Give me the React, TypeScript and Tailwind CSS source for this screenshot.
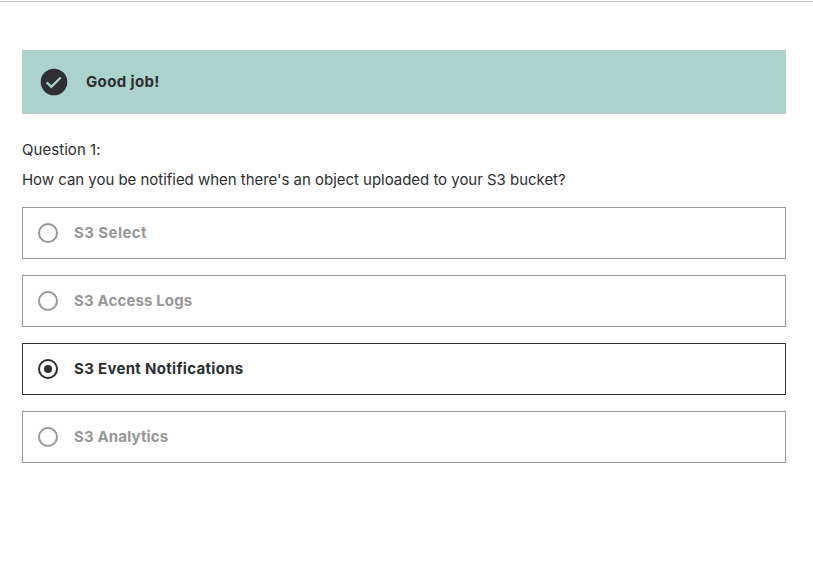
const options = [
  { label: 'S3 Select', tracking: 'tracking-[0.42px]' },
  { label: 'S3 Access Logs', tracking: 'tracking-[0.14px]' },
  { label: 'S3 Event Notifications', tracking: 'tracking-[0.31px]', selected: true },
  { label: 'S3 Analytics', tracking: 'tracking-[0.14px]' },
];

function CheckCircle() {
  return (
    <svg width="28" height="28" viewBox="0 0 28 28" aria-hidden="true">
      <circle cx="14" cy="14" r="13.3" fill="#2d2f31" />
      <path d="M6.7 14.4l4.6 4.5 9.4-9.4" fill="none" stroke="#acd2cc" strokeWidth="2.2" />
    </svg>
  );
}

function Radio({ checked }: { checked?: boolean }) {
  return (
    <svg width="20" height="20" viewBox="0 0 20 20" aria-hidden="true">
      <circle cx="10" cy="10" r="9" fill="none" stroke="currentColor" strokeWidth="2" />
      {checked && <circle cx="10" cy="10" r="4" fill="currentColor" />}
    </svg>
  );
}

export default function App() {
  return (
    <main className="h-[583px] bg-white pt-px font-['Inter',sans-serif] text-[15px] text-[#2d2f31]">
      <div className="border-t border-[#c8c8c8] px-[22px] pt-12">
        <div className="w-[764px]">
          <div className="flex h-16 items-center bg-[#acd2cc] pl-[18px] font-bold">
            <CheckCircle />
            <span className="ml-[18px] tracking-[0.36px]">Good job!</span>
          </div>
          <p className="mt-[25px] leading-[22px] tracking-[0.05px]">Question 1:</p>
          <p className="mt-2 leading-[22px] tracking-[-0.03px]">How can you be notified when there's an object uploaded to your S3 bucket?</p>
          <div className="mt-4 flex flex-col gap-4">
            {options.map(({ label, tracking, selected }) => (
              <div
                key={label}
                className={`flex h-[52px] items-center border pl-[15px] font-bold ${selected ? 'border-[#2d2f31]' : 'border-[#969797] text-[#969797]'}`}
              >
                <Radio checked={selected} />
                <span className={`ml-4 ${tracking}`}>{label}</span>
              </div>
            ))}
          </div>
        </div>
      </div>
    </main>
  );
}
